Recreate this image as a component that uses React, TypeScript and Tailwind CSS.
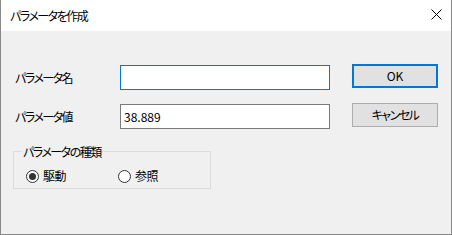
const font = "font-['Yu_Gothic_UI','Noto_Sans_CJK_JP',sans-serif] [font-feature-settings:'palt'] tracking-[-1.5px]";

function Radio({ checked, label }: { checked?: boolean; label: string }) {
  return (
    <label className="flex items-center gap-[4px]">
      <span className="grid size-[13px] place-items-center rounded-full border border-[#333] bg-white">
        {checked && <span className="size-[7px] rounded-full bg-[#333]" />}
      </span>
      <span className="tracking-[-0.5px]">{label}</span>
    </label>
  );
}

export default function App() {
  return (
    <div
      className={`flex h-[235px] w-[452px] flex-col border-x border-b border-[#888] bg-[#f0f0f0] text-[12px] text-black ${font}`}
    >
      <div className="flex h-[31px] items-center justify-between bg-white pl-[9px] pr-[9px]">
        <span>パラメータを作成</span>
        <svg width="11" height="11" viewBox="0 0 11 11" className="mb-[2px]">
          <path d="M0.5 0.5L10.5 10.5M10.5 0.5L0.5 10.5" stroke="#000" strokeWidth="1" />
        </svg>
      </div>

      <div className="flex pt-[33px]">
        <div className="flex flex-col pl-[12px]">
          <div className="mt-[1px] flex items-center pl-[2px]">
            <span className="w-[105px]">パラメータ名</span>
            <input className="h-[25px] w-[210px] border border-[#0078d7] bg-white px-[3px] outline-none" />
          </div>
          <div className="mt-[14px] flex items-center pl-[2px]">
            <span className="w-[105px]">パラメータ値</span>
            <input
              defaultValue="38.889"
              className="h-[25px] w-[210px] border border-[#7a7a7a] bg-white px-[3px] text-[12px] tracking-normal outline-none"
            />
          </div>

          <div className="relative mt-[22px] h-[38px] w-[198px] border border-[#dcdcdc] pl-[12px] pt-[15px]">
            <span className="absolute -top-[9px] left-[8px] bg-[#f0f0f0] px-[1px]">パラメータの種類</span>
            <div className="flex gap-[46px]">
              <div className="w-[46px]">
                <Radio checked label="駆動" />
              </div>
              <Radio label="参照" />
            </div>
          </div>
        </div>

        <div className="ml-[22px] flex flex-col gap-[15px]">
          <button className="h-[24px] w-[86px] border-2 border-[#0078d7] bg-[#e1e1e1] tracking-normal">OK</button>
          <button className="h-[24px] w-[86px] border border-[#adadad] bg-[#e1e1e1]">キャンセル</button>
        </div>
      </div>
    </div>
  );
}
